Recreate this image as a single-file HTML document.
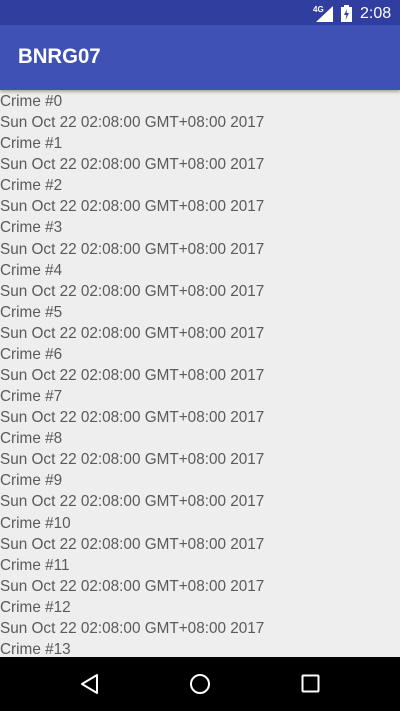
<!DOCTYPE html><html><head><style>
body{margin:0;width:400px;height:711px;overflow:hidden;background:#eeeeee;font-family:"Liberation Sans",sans-serif;position:relative}
.sb{position:absolute;top:0;left:0;width:400px;height:25px;background:#303f9f;color:#fff}
.ab{position:absolute;top:25px;left:0;width:400px;height:65px;background:#3f51b5;box-shadow:0 2px 3px rgba(0,0,0,.3);z-index:2}
.ab span{position:absolute;left:18px;top:20px;color:#fff;font-size:21px;font-weight:bold;transform:scaleX(0.97);transform-origin:0 0;display:inline-block}
.list{position:absolute;top:91px;left:0;color:#5a5a5a;font-size:16px;line-height:21.08px;transform:scaleX(0.957);transform-origin:0 0;white-space:nowrap}
.nav{position:absolute;bottom:0;left:0;width:400px;height:54px;background:#000;z-index:3}
</style></head><body>
<div class="sb">
<span style="position:absolute;left:313px;top:5px;font-size:8px;font-weight:bold">4G</span>
<svg style="position:absolute;left:316px;top:6px" width="18" height="16"><polygon points="0,16 17,16 17,0" fill="#fff"/></svg>
<svg style="position:absolute;left:341px;top:5px" width="11" height="17"><rect x="0" y="2" width="11" height="15" fill="#fff"/><rect x="3" y="0" width="5" height="2" fill="#fff"/><polygon points="6,4 3,10 5.5,10 4.5,15 8,8 5.5,8" fill="#303f9f"/></svg>
<span style="position:absolute;left:360px;top:5px;font-size:16px">2:08</span>
</div>
<div class="ab"><span>BNRG07</span></div>
<div class="list">
Crime #0<br>Sun Oct 22 02:08:00 GMT+08:00 2017<br>
Crime #1<br>Sun Oct 22 02:08:00 GMT+08:00 2017<br>
Crime #2<br>Sun Oct 22 02:08:00 GMT+08:00 2017<br>
Crime #3<br>Sun Oct 22 02:08:00 GMT+08:00 2017<br>
Crime #4<br>Sun Oct 22 02:08:00 GMT+08:00 2017<br>
Crime #5<br>Sun Oct 22 02:08:00 GMT+08:00 2017<br>
Crime #6<br>Sun Oct 22 02:08:00 GMT+08:00 2017<br>
Crime #7<br>Sun Oct 22 02:08:00 GMT+08:00 2017<br>
Crime #8<br>Sun Oct 22 02:08:00 GMT+08:00 2017<br>
Crime #9<br>Sun Oct 22 02:08:00 GMT+08:00 2017<br>
Crime #10<br>Sun Oct 22 02:08:00 GMT+08:00 2017<br>
Crime #11<br>Sun Oct 22 02:08:00 GMT+08:00 2017<br>
Crime #12<br>Sun Oct 22 02:08:00 GMT+08:00 2017<br>
Crime #13<br>Sun Oct 22 02:08:00 GMT+08:00 2017
</div>
<div class="nav">
<svg style="position:absolute;left:79px;top:16px" width="22" height="22"><polygon points="18,2 18,20 3,11" fill="none" stroke="#fff" stroke-width="2" stroke-linejoin="round"/></svg>
<svg style="position:absolute;left:189px;top:16px" width="22" height="22"><circle cx="11" cy="11" r="9" fill="none" stroke="#fff" stroke-width="2"/></svg>
<svg style="position:absolute;left:301px;top:17px" width="20" height="20"><rect x="1.5" y="1.5" width="16" height="16" rx="1" fill="none" stroke="#fff" stroke-width="2"/></svg>
</div>
</body></html>
